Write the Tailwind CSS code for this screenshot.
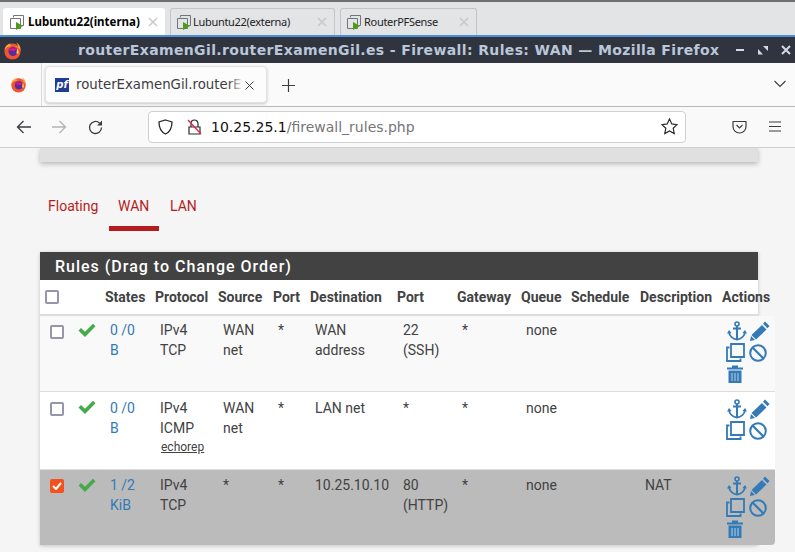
<!DOCTYPE html>
<html lang="en">
<head>
  <meta charset="UTF-8" />
  <title>Firewall: Rules: WAN</title>
  <script src="https://cdn.jsdelivr.net/npm/@tailwindcss/browser@4"></script>
</head>
<body class="w-[795px] h-[552px] overflow-hidden bg-[#f5f5f5] font-['Roboto',sans-serif]">
  <!-- shared icons -->
  <svg class="hidden">
    <symbol id="vm" viewBox="0 0 16 16">
      <path d="M4.500 3.500V1.500h10v10h-2M1.500 4.500h10v10h-10z" fill="none" stroke="#71757c" stroke-width="1"/>
      <path d="M7 8l7 4-7 4z" fill="#4e9a1a"/>
    </symbol>
    <symbol id="close" viewBox="0 0 10 10">
      <path d="M1 1l8 8M9 1l-8 8" stroke="#c8c8c8" stroke-width="1.500"/>
    </symbol>
    <symbol id="fox" viewBox="0 0 20 20">
      <circle cx="10" cy="11" r="8.500" fill="#f2542d"/>
      <path d="M1.500 10C2 5 5 3 8 2.500c-1 1-.5 2 1 2.500 3 0 6 .5 7 3 .5-2-.5-4.500-2-6.500 3 1.500 5 5 4.500 9-1-3-3-5-7-5.500C8 5 3 6 1.500 10z" fill="#ffa436"/>
      <circle cx="10.500" cy="11" r="4.800" fill="#5b2a9d"/>
      <path d="M5.500 9.500c2-2.500 7-2.500 9.500-.5l-4 1.500z" fill="#e31587"/>
      <path d="M15 8c1.500 1.500 2 4 1 6l-2-1z" fill="#ffbd4f"/>
    </symbol>
    <symbol id="check" viewBox="0 0 18 14">
      <path d="M.5 7.500l2.500-2.500 4 3.800 8-8 2.500 2.500L7 14z" fill="#44ab4a"/>
    </symbol>
    <symbol id="anchor" viewBox="0 0 20 20">
      <circle cx="10" cy="3" r="2" fill="none" stroke="#337ab7" stroke-width="1.600"/>
      <path d="M6 7.500h8M10 5v13.500M2 11c.5 4 4 7 8 7.500 4-.5 7.500-3.500 8-7.500" fill="none" stroke="#337ab7" stroke-width="2"/>
      <path d="M0 12.500l2-3.500 2.500 3zM15.500 12l2.500-3 2 3.500z" fill="#337ab7"/>
    </symbol>
    <symbol id="pencil" viewBox="0 0 20 20">
      <path d="M15 .5l4.500 4.500-2 2.200L13 2.700zM12 4l4.500 4.500L6 18.500 1.500 14z" fill="#337ab7"/>
      <path d="M1 15l4 4-5 1z" fill="#337ab7"/>
    </symbol>
    <symbol id="copy" viewBox="0 0 19 19">
      <path d="M5 1h13v13H5z" fill="none" stroke="#337ab7" stroke-width="1.800"/>
      <path d="M3.500 4.500H1V18h13.500v-2.500" fill="none" stroke="#337ab7" stroke-width="1.800"/>
    </symbol>
    <symbol id="ban" viewBox="0 0 18 18">
      <circle cx="9" cy="9" r="7.800" fill="none" stroke="#337ab7" stroke-width="2"/>
      <path d="M3.500 3.500l11 11" stroke="#337ab7" stroke-width="2.200"/>
    </symbol>
    <symbol id="trash" viewBox="0 0 16 18">
      <path d="M0 2.500h16V4.500H0zM5 .5h6v2H5z" fill="#337ab7"/>
      <path d="M1.500 5.500h13V18h-13z" fill="#337ab7"/>
      <path d="M5 8v8M8 8v8M11 8v8" stroke="#b9cfe3" stroke-width="1"/>
    </symbol>
  </svg>

  <!-- vm tabs -->
  <div class="h-[35px] bg-[#e3e4e6] border-t-2 border-[#6f6f6f] flex items-end pl-[3px] gap-[5px] font-['Noto_Sans',sans-serif] text-[11px]">
    <div class="w-[162px] h-[27px] bg-white rounded-t-[3px] flex items-center pl-[6px] pr-[6px] font-bold text-black text-[11.500px]">
      <svg class="w-[16px] h-[16px] mr-[3px] shrink-0"><use href="#vm"/></svg>
      <span>Lubuntu22(interna)</span>
      <svg class="ml-auto mr-[1px] w-[10px] h-[10px]"><use href="#close"/></svg>
    </div>
    <div class="w-[165px] h-[27px] border border-b-0 border-[#c4c5c8] rounded-t-[3px] flex items-center pl-[5px] pr-[6px] text-[#222] tracking-[-0.3px]">
      <svg class="w-[16px] h-[16px] mr-[1px] shrink-0"><use href="#vm"/></svg>
      <span>Lubuntu22(externa)</span>
      <svg class="ml-auto mr-[1px] w-[10px] h-[10px]"><use href="#close"/></svg>
    </div>
    <div class="w-[137px] h-[27px] border border-b-0 border-[#c4c5c8] rounded-t-[3px] flex items-center pl-[5px] pr-[6px] text-[#222] tracking-[-0.3px]">
      <svg class="w-[16px] h-[16px] mr-[2px] shrink-0"><use href="#vm"/></svg>
      <span>RouterPFSense</span>
      <svg class="ml-auto mr-[1px] w-[10px] h-[10px]"><use href="#close"/></svg>
    </div>
  </div>
  <div class="h-[2px] bg-[#4a90d9]"></div>

  <!-- window title -->
  <div class="h-[26px] bg-[#2f343f] flex items-center relative font-['DejaVu_Sans',sans-serif]">
    <svg class="w-[19px] h-[19px] ml-[3px]"><use href="#fox"/></svg>
    <span class="ml-[56px] text-[14px] font-bold text-[#bac7d8] whitespace-nowrap tracking-[0.37px]">routerExamenGil.routerExamenGil.es - Firewall: Rules: WAN — Mozilla Firefox</span>
    <div class="absolute right-[4px] top-0 h-full flex items-center gap-[13px] text-[#d3dae3]">
      <svg class="w-[10px] h-[10px]" viewBox="0 0 10 10"><path d="M1 5h8" stroke="currentColor" stroke-width="2"/></svg>
      <svg class="w-[10px] h-[10px]" viewBox="0 0 10 10"><path d="M5 1h5v5zM0 4l5 5.500H0z" fill="currentColor"/></svg>
      <svg class="w-[10px] h-[10px]" viewBox="0 0 10 10"><path d="M1 1l8 8M9 1l-8 8" stroke="currentColor" stroke-width="2"/></svg>
    </div>
  </div>

  <!-- firefox tab bar -->
  <div class="h-[44px] bg-[#fafafa] border-b border-[#b8b8b8] flex relative">
    <div class="w-[42px] border-r border-[#dcdcdc] flex items-center justify-center">
      <svg class="w-[17px] h-[17px] ml-[-4px]"><use href="#fox"/></svg>
    </div>
    <div class="ml-[3px] mt-[3px] w-[222px] h-[37px] bg-[#fcfcfc] rounded-[4px] border border-[#e2e2e2] shadow-[0_1px_3px_rgba(0,0,0,0.2)] flex items-center pl-[9px] relative font-['DejaVu_Sans',sans-serif]">
      <span class="w-[14px] h-[14px] bg-[#1f3c96] text-white text-[10px] leading-[14px] font-bold italic text-center shrink-0">pf</span>
      <span class="ml-[7px] text-[13.300px] text-[#3c3c42] whitespace-nowrap">routerExamenGil.routerE</span>
      <div class="absolute right-[22px] top-0 h-full w-[16px] bg-gradient-to-r from-transparent to-[#fcfcfc]"></div>
      <svg class="absolute right-[12px] top-[14px] w-[9px] h-[9px]" viewBox="0 0 9 9"><path d="M.5.500l8 8M8.500.500l-8 8" stroke="#3c3c42" stroke-width="1"/></svg>
    </div>
    <svg class="ml-[15px] mt-[16px] w-[13px] h-[13px]" viewBox="0 0 13 13"><path d="M6.500 0v13M0 6.500h13" stroke="#3c3c42" stroke-width="1.200"/></svg>
    <svg class="absolute right-[9px] top-[17px] w-[12px] h-[8px]" viewBox="0 0 12 8"><path d="M.5 1l5.500 5.500L11.500 1" fill="none" stroke="#3c3c42" stroke-width="1.100"/></svg>
  </div>

  <!-- nav bar -->
  <div class="h-[41px] bg-[#f9f9fa] border-b border-[#cfcfcf] flex items-center relative">
    <svg class="ml-[16px] w-[15px] h-[14px]" viewBox="0 0 15 14"><path d="M15 7H1.500M7.500 1l-6 6 6 6" fill="none" stroke="#3c3c42" stroke-width="1.300"/></svg>
    <svg class="ml-[21px] w-[15px] h-[14px]" viewBox="0 0 15 14"><path d="M0 7h13.500M7.500 1l6 6-6 6" fill="none" stroke="#b4b4b6" stroke-width="1.300"/></svg>
    <svg class="ml-[21px] w-[15px] h-[15px]" viewBox="0 0 15 15"><path d="M13.500 7.500A6 6 0 1 1 11.500 3" fill="none" stroke="#3c3c42" stroke-width="1.300"/><path d="M14 .5v5h-5z" fill="#3c3c42"/></svg>
    <div class="absolute left-[148px] top-[4px] w-[538px] h-[32px] bg-white border border-[#d0d0d0] rounded-[4px] flex items-center pl-[9px] font-['DejaVu_Sans',sans-serif] text-[14px]">
      <svg class="w-[15px] h-[16px]" viewBox="0 0 15 16"><path d="M7.500 1L14 3c0 6-2 10-6.500 12C3 13 1 9 1 3z" fill="none" stroke="#2b2b30" stroke-width="1.300"/></svg>
      <svg class="ml-[14px] w-[15px] h-[16px]" viewBox="0 0 15 16"><path d="M4 8V4.500a3.500 3.500 0 0 1 7 0V8M2 8h11v7H2z" fill="none" stroke="#2b2b30" stroke-width="1.200"/><path d="M1 1l13 14" stroke="#e22850" stroke-width="1.400"/></svg>
      <span class="ml-[9px] text-[#111]">10.25.25.1</span><span class="text-[#75757a]">/firewall_rules.php</span>
      <svg class="absolute right-[7px] top-[6px] w-[17px] h-[17px]" viewBox="0 0 17 17"><path d="M8.500 1l2.300 4.900 5.200.7-3.800 3.600 1 5.300-4.700-2.600-4.700 2.600 1-5.300L1 6.600l5.200-.7z" fill="none" stroke="#2b2b30" stroke-width="1.200"/></svg>
    </div>
    <svg class="absolute left-[732px] top-[13px] w-[15px] h-[14px]" viewBox="0 0 15 14"><path d="M1 1.500h13v5a6.500 6.500 0 0 1-13 0z" fill="none" stroke="#3c3c42" stroke-width="1.200" stroke-linejoin="round"/><path d="M4.500 5l3 3 3-3" fill="none" stroke="#3c3c42" stroke-width="1.200"/></svg>
    <svg class="absolute left-[769px] top-[14px] w-[12px] h-[11px]" viewBox="0 0 12 11"><path d="M0 1h12M0 5.500h12M0 10h12" stroke="#3c3c42" stroke-width="1.200"/></svg>
  </div>

  <!-- page -->
  <div class="pl-[40px] text-[14px] text-[#424242]">
    <div class="w-[718px] h-[14px] bg-[#e0e0e0] shadow-[0_2px_5px_rgba(0,0,0,0.25)]"></div>

    <div class="flex mt-[36px] h-[33px] text-[#b71c1c] leading-[16px]">
      <div class="w-[69px] pl-[8px]">Floating</div>
      <div class="pl-[9px] w-[50px] h-[33px] border-b-[5px] border-[#b71c1c]">WAN</div>
      <div class="pl-[11px]">LAN</div>
    </div>

    <div class="mt-[21px] w-[718px] shadow-[0_1px_4px_rgba(0,0,0,0.2)]">
      <div class="h-[28px] bg-[#424242] text-white text-[16px] font-medium tracking-[1px] leading-[29px] pl-[15px] whitespace-nowrap">Rules (Drag to Change Order)</div>
      <div class="h-[36px] bg-white border-b-[2px] border-[#ddd] grid grid-cols-[60px_50px_63px_55px_37px_87px_60px_64px_50px_69px_82px_1px] items-center font-bold whitespace-nowrap leading-[16px] relative">
        <div class="pl-[5px]"><span class="block w-[14px] h-[14px] border-2 border-[#9695ab] rounded-[2px] bg-white"></span></div>
        <div class="pl-[5px]">States</div><div class="pl-[5px]">Protocol</div><div class="pl-[5px]">Source</div><div class="pl-[5px]">Port</div><div class="pl-[5px]">Destination</div><div class="pl-[5px]">Port</div><div class="pl-[5px]">Gateway</div><div class="pl-[5px]">Queue</div><div class="pl-[5px]">Schedule</div><div class="pl-[5px]">Description</div><div class="pl-[5px]">Actions</div>
      </div>

      <div class="w-[735px] h-[76px] bg-[#f9f9f9] border-b border-[#ddd] grid grid-cols-[30px_30px_50px_63px_55px_37px_87px_60px_64px_50px_69px_82px_58px] pt-[4px] leading-[20px]">
        <div class="pl-[10px] pt-[5px]"><span class="block w-[14px] h-[14px] border-2 border-[#9695ab] rounded-[2px] bg-white"></span></div>
        <div class="pl-[8px] pt-[3px]"><svg class="w-[18px] h-[14px]"><use href="#check"/></svg></div>
        <div class="pl-[10px] text-[#337ab7]">0 /0<br>B</div>
        <div class="pl-[10px]">IPv4<br>TCP</div>
        <div class="pl-[10px]">WAN<br>net</div>
        <div class="pl-[10px]">*</div>
        <div class="pl-[10px]">WAN<br>address</div>
        <div class="pl-[11px]">22<br>(SSH)</div>
        <div class="pl-[10px]">*</div>
        <div class="pl-[10px]">none</div>
        <div></div>
        <div></div>
        <div class="pl-[10px] pt-[1px] flex flex-col gap-[2px]">
          <div class="flex gap-[3px]"><svg class="w-[20px] h-[20px]"><use href="#anchor"/></svg><svg class="w-[20px] h-[20px]"><use href="#pencil"/></svg></div>
          <div class="flex gap-[4px] ml-[-1px]"><svg class="w-[19px] h-[19px]"><use href="#copy"/></svg><svg class="w-[18px] h-[18px] mt-[1px]"><use href="#ban"/></svg></div>
          <svg class="w-[16px] h-[18px] mt-[1px]"><use href="#trash"/></svg>
        </div>
      </div>
      <div class="w-[735px] h-[78px] bg-white border-b border-[#ddd] grid grid-cols-[30px_30px_50px_63px_55px_37px_87px_60px_64px_50px_69px_82px_58px] pt-[6px] leading-[20px]">
        <div class="pl-[10px] pt-[4px]"><span class="block w-[14px] h-[14px] border-2 border-[#9695ab] rounded-[2px] bg-white"></span></div>
        <div class="pl-[8px] pt-[2px]"><svg class="w-[18px] h-[14px]"><use href="#check"/></svg></div>
        <div class="pl-[10px] text-[#337ab7]">0 /0<br>B</div>
        <div class="pl-[10px]">IPv4<br>ICMP<br><span class="text-[12px] leading-[16px] underline block ml-[1px] mt-[1px]">echorep</span></div>
        <div class="pl-[10px]">WAN<br>net</div>
        <div class="pl-[10px]">*</div>
        <div class="pl-[10px]">LAN net</div>
        <div class="pl-[11px]">*</div>
        <div class="pl-[10px]">*</div>
        <div class="pl-[10px]">none</div>
        <div></div>
        <div></div>
        <div class="pl-[10px] pt-[1px] flex flex-col gap-[2px]">
          <div class="flex gap-[3px]"><svg class="w-[20px] h-[20px]"><use href="#anchor"/></svg><svg class="w-[20px] h-[20px]"><use href="#pencil"/></svg></div>
          <div class="flex gap-[4px] ml-[-1px]"><svg class="w-[19px] h-[19px]"><use href="#copy"/></svg><svg class="w-[18px] h-[18px] mt-[1px]"><use href="#ban"/></svg></div>
        </div>
      </div>
      <div class="w-[735px] h-[75px] bg-[#bbbbbb] rounded-br-[4px] grid grid-cols-[30px_30px_50px_63px_55px_37px_87px_60px_64px_50px_69px_82px_58px] pt-[5px] leading-[20px]">
        <div class="pl-[10px] pt-[4px]"><span class="flex w-[14px] h-[14px] bg-[#f4511e] rounded-[2px] items-center justify-center"><svg class="w-[10px] h-[8px]" viewBox="0 0 10 8"><path d="M1 4l3 3 5-6" fill="none" stroke="#fff" stroke-width="2"/></svg></span></div>
        <div class="pl-[8px] pt-[3px]"><svg class="w-[18px] h-[14px]"><use href="#check"/></svg></div>
        <div class="pl-[10px] text-[#337ab7]">1 /2<br>KiB</div>
        <div class="pl-[10px]">IPv4<br>TCP</div>
        <div class="pl-[10px]">*</div>
        <div class="pl-[10px]">*</div>
        <div class="pl-[10px]">10.25.10.10</div>
        <div class="pl-[11px]">80<br>(HTTP)</div>
        <div class="pl-[10px]">*</div>
        <div class="pl-[10px]">none</div>
        <div></div>
        <div class="pl-[10px]">NAT</div>
        <div class="pl-[10px] pt-[1px] flex flex-col gap-[2px]">
          <div class="flex gap-[3px]"><svg class="w-[20px] h-[20px]"><use href="#anchor"/></svg><svg class="w-[20px] h-[20px]"><use href="#pencil"/></svg></div>
          <div class="flex gap-[4px] ml-[-1px]"><svg class="w-[19px] h-[19px]"><use href="#copy"/></svg><svg class="w-[18px] h-[18px] mt-[1px]"><use href="#ban"/></svg></div>
          <svg class="w-[16px] h-[18px] mt-[1px]"><use href="#trash"/></svg>
        </div>
      </div>
    </div>
  </div>
</body>
</html>
